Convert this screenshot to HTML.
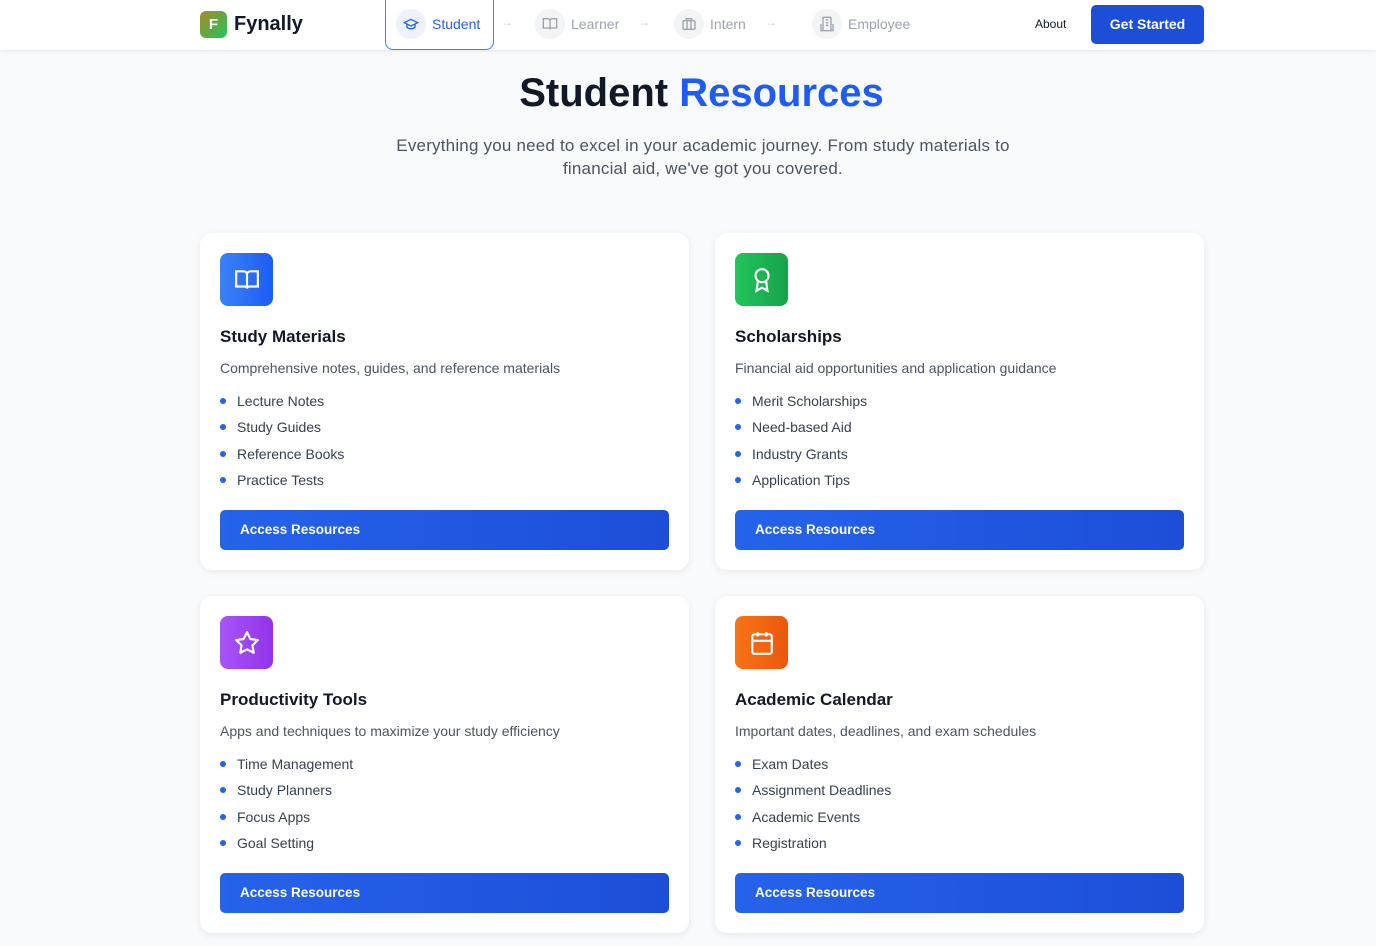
<!DOCTYPE html>
<html><head><meta charset="utf-8"><style>
*{box-sizing:border-box;margin:0;padding:0}
body{width:1376px;height:946px;overflow:hidden;background:#f8fafc;font-family:"Liberation Sans",sans-serif;color:#111827;position:relative}
.hdr{position:absolute;left:0;top:0;width:1376px;height:50px;background:#fff;box-shadow:0 1px 4px rgba(0,0,0,.08)}
.logo{position:absolute;left:200px;top:11px;width:27px;height:27px;border-radius:6px;background:linear-gradient(135deg,#a98a25,#22c55e);color:#fff;font-weight:bold;font-size:15px;text-align:center;line-height:27px}
.brand{position:absolute;left:234px;top:13px;font-size:20px;font-weight:bold;color:#111827}
.step{position:absolute;top:8px;height:32px;display:flex;align-items:center;font-size:14px;color:#9ca3af}
.step .ic{width:30px;height:30px;border-radius:50%;background:#f3f4f6;display:flex;align-items:center;justify-content:center;margin-right:6px}
.arr{position:absolute;top:15px;color:#c4c8cf;font-size:12px}
.active{position:absolute;left:385px;top:0;width:109px;height:50px;border:1px solid #3b82f6;border-top:none;border-radius:0 0 8px 8px}
.about{position:absolute;left:1035px;top:17px;font-size:12px;color:#111827}
.gs{position:absolute;left:1091px;top:5px;width:113px;height:39px;background:#1d4ed8;border-radius:5px;color:#fff;font-weight:bold;font-size:14px;text-align:center;line-height:39px}
h1{position:absolute;left:0;width:1376px;top:71px;text-align:center;font-size:40px;font-weight:bold;color:#111827;padding-left:27px}
h1 span{color:#1d5cf5}
.sub{position:absolute;left:383px;width:640px;top:134px;text-align:center;font-size:17px;line-height:23px;color:#4b5563;letter-spacing:.2px}
.card{position:absolute;width:489px;height:337px;background:#fff;border-radius:12px;box-shadow:0 2px 8px rgba(0,0,0,.07)}
.icon{position:absolute;left:20px;top:20px;width:53px;height:53px;border-radius:8px;display:flex;align-items:center;justify-content:center}
.t{position:absolute;left:20px;top:94px;font-size:17px;font-weight:bold;color:#111827}
.d{position:absolute;left:20px;top:127px;font-size:14px;color:#4b5563}
ul{position:absolute;left:20px;top:159px;list-style:none}
li{font-size:14px;color:#374151;height:26.4px;line-height:18px;padding-left:17px;position:relative}
li:before{content:"";position:absolute;left:0;top:6px;width:6px;height:6px;border-radius:50%;background:#2563eb}
.btn{position:absolute;left:20px;top:277px;width:449px;height:40px;border-radius:5px;background:linear-gradient(90deg,#2563eb,#1d4ed8);color:#fff;font-weight:bold;font-size:13.5px;line-height:39px;padding-left:20px}
</style></head><body>
<div class="hdr">
<div class="logo">F</div><div class="brand">Fynally</div>
<div class="active"></div>
<div class="step" style="left:396px;color:#2563eb"><div class="ic" style="background:#eef2ff"><svg width="16" height="16" viewBox="0 0 24 24" fill="none" stroke="#2563eb" stroke-width="2"><path d="M22 10L12 5 2 10l10 5 10-5z"/><path d="M6 12v5c3 3 9 3 12 0v-5"/></svg></div>Student</div>
<div class="arr" style="left:501px">→</div>
<div class="step" style="left:535px"><div class="ic"><svg width="16" height="16" viewBox="0 0 24 24" fill="none" stroke="#9ca3af" stroke-width="2"><path d="M2 4h7a3 3 0 013 3v13a2 2 0 00-2-2H2zM22 4h-7a3 3 0 00-3 3v13a2 2 0 012-2h8z"/></svg></div>Learner</div>
<div class="arr" style="left:638px">→</div>
<div class="step" style="left:674px"><div class="ic"><svg width="16" height="16" viewBox="0 0 24 24" fill="none" stroke="#9ca3af" stroke-width="2"><rect x="3" y="7" width="18" height="13" rx="2"/><path d="M8 7V4h8v3M9 7v13M15 7v13"/></svg></div>Intern</div>
<div class="arr" style="left:765px">→</div>
<div class="step" style="left:812px"><div class="ic"><svg width="16" height="16" viewBox="0 0 24 24" fill="none" stroke="#9ca3af" stroke-width="2"><rect x="6" y="2" width="12" height="20" rx="1"/><path d="M10 6h4M10 10h4M10 14h4M3 12v10h3M21 12v10h-3"/></svg></div>Employee</div>
<div class="about">About</div>
<div class="gs">Get Started</div>
</div>
<h1>Student <span>Resources</span></h1>
<div class="sub">Everything you need to excel in your academic journey. From study materials to financial aid, we've got you covered.</div>

<div class="card" style="left:200px;top:233px">
<div class="icon" style="background:linear-gradient(90deg,#3b82f6,#1d5cf5)"><svg width="26" height="26" viewBox="0 0 24 24" fill="none" stroke="#fff" stroke-width="2"><path d="M2 4h7a3 3 0 013 3v13a2 2 0 00-2-2H2zM22 4h-7a3 3 0 00-3 3v13a2 2 0 012-2h8z"/></svg></div>
<div class="t">Study Materials</div><div class="d">Comprehensive notes, guides, and reference materials</div>
<ul><li>Lecture Notes</li><li>Study Guides</li><li>Reference Books</li><li>Practice Tests</li></ul>
<div class="btn">Access Resources</div></div>

<div class="card" style="left:715px;top:233px">
<div class="icon" style="background:linear-gradient(90deg,#22c55e,#16a34a)"><svg width="26" height="26" viewBox="0 0 24 24" fill="none" stroke="#fff" stroke-width="2"><circle cx="12" cy="8" r="6"/><path d="M8.2 13.2L7 22l5-3 5 3-1.2-8.8"/></svg></div>
<div class="t">Scholarships</div><div class="d">Financial aid opportunities and application guidance</div>
<ul><li>Merit Scholarships</li><li>Need-based Aid</li><li>Industry Grants</li><li>Application Tips</li></ul>
<div class="btn">Access Resources</div></div>

<div class="card" style="left:200px;top:596px">
<div class="icon" style="background:linear-gradient(90deg,#a855f7,#9333ea)"><svg width="26" height="26" viewBox="0 0 24 24" fill="none" stroke="#fff" stroke-width="2" stroke-linejoin="round"><path d="M12 2l3.1 6.3 6.9 1-5 4.9 1.2 6.8L12 17.8 5.8 21l1.2-6.8-5-4.9 6.9-1z"/></svg></div>
<div class="t">Productivity Tools</div><div class="d">Apps and techniques to maximize your study efficiency</div>
<ul><li>Time Management</li><li>Study Planners</li><li>Focus Apps</li><li>Goal Setting</li></ul>
<div class="btn">Access Resources</div></div>

<div class="card" style="left:715px;top:596px">
<div class="icon" style="background:linear-gradient(90deg,#f97316,#ea580c)"><svg width="26" height="26" viewBox="0 0 24 24" fill="none" stroke="#fff" stroke-width="2"><rect x="3" y="4" width="18" height="18" rx="2"/><path d="M8 2v4M16 2v4M3 10h18"/></svg></div>
<div class="t">Academic Calendar</div><div class="d">Important dates, deadlines, and exam schedules</div>
<ul><li>Exam Dates</li><li>Assignment Deadlines</li><li>Academic Events</li><li>Registration</li></ul>
<div class="btn">Access Resources</div></div>
</body></html>
